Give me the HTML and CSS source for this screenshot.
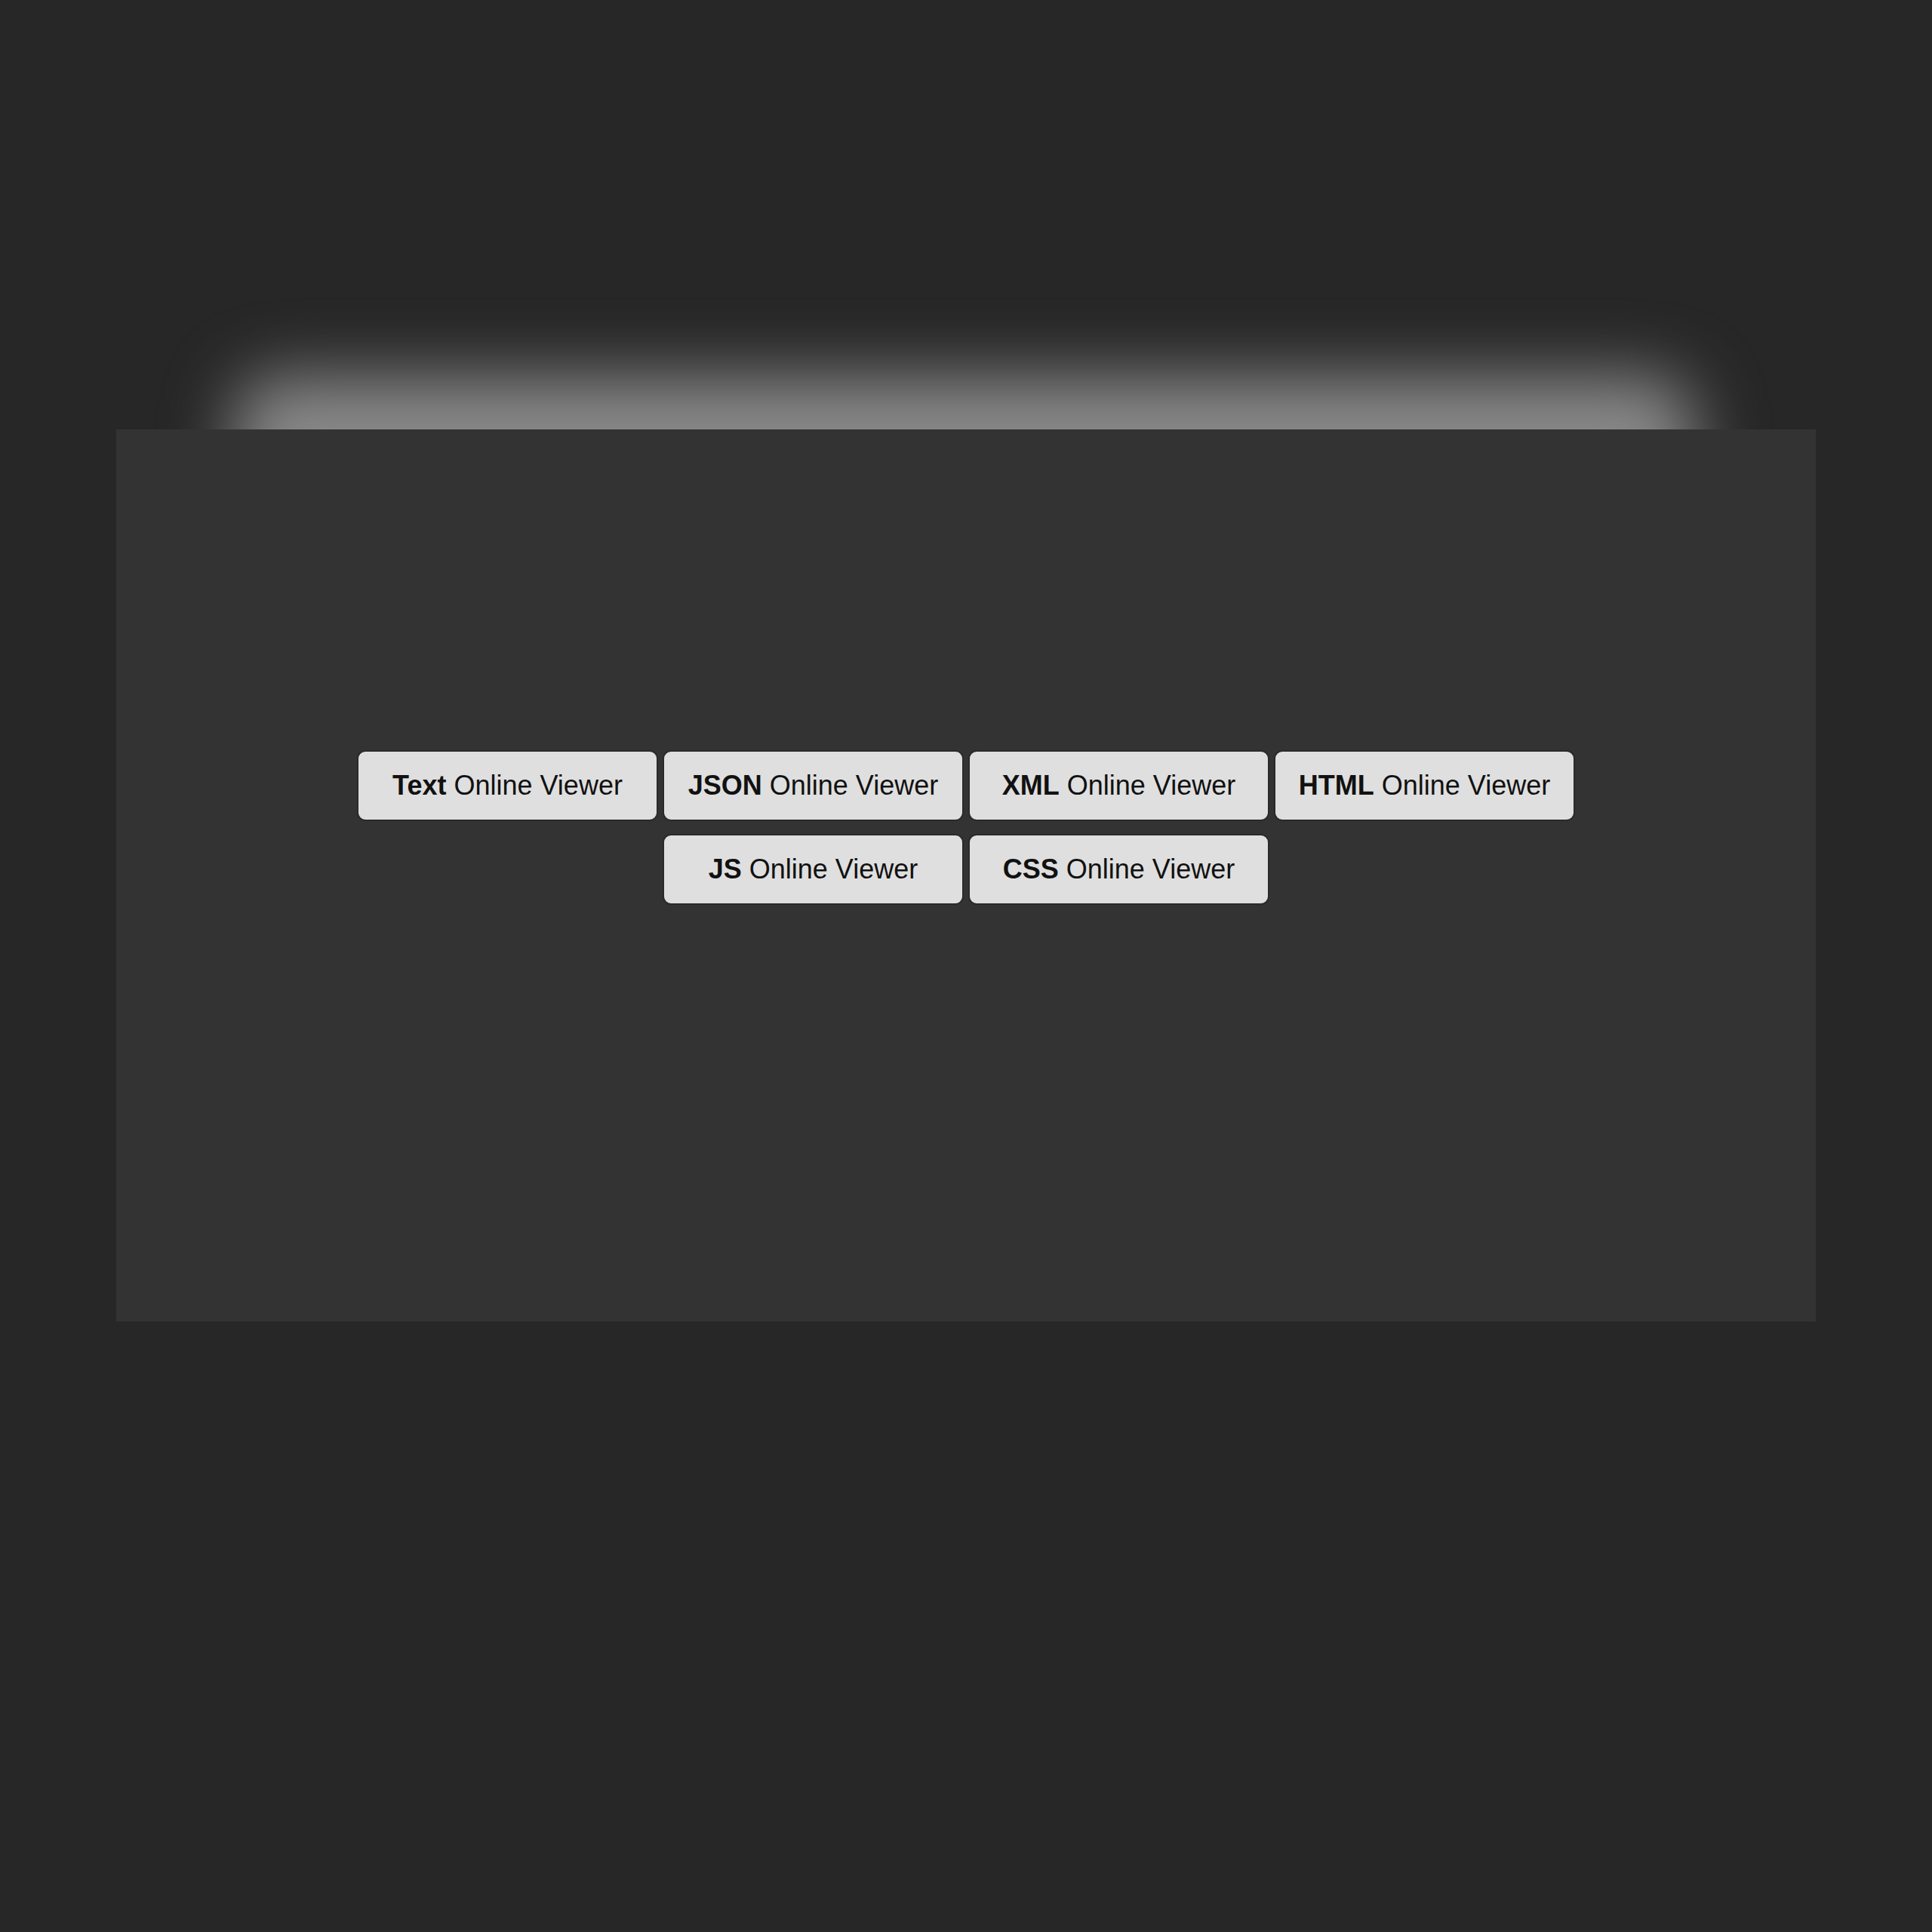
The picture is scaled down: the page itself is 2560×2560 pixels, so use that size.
FILE: index.html
```html
<!DOCTYPE html>
<html lang="en">
<head>
    <meta charset="UTF-8">
    <meta name="viewport" content="width=device-width, initial-scale=1.0">
    <title>Online Viewers</title>
    <link rel="stylesheet" href="styles.css">
</head>
<body>
    <div id="page">
        <div id="stage">
            <div class="glow"></div>
            <div id="panel">
                <div id="viewer-list">
                    <button class="viewer-button"><strong>Text</strong> Online Viewer</button>
                    <button class="viewer-button"><strong>JSON</strong> Online Viewer</button>
                    <button class="viewer-button"><strong>XML</strong> Online Viewer</button>
                    <button class="viewer-button"><strong>HTML</strong> Online Viewer</button>
                    <button class="viewer-button"><strong>JS</strong> Online Viewer</button>
                    <button class="viewer-button"><strong>CSS</strong> Online Viewer</button>
                </div>
            </div>
        </div>
    </div>
</body>
</html>
```

FILE: styles.css
```css
* {
    box-sizing: border-box;
    margin: 0;
    padding: 0;
}

body {
    font-family: 'Liberation Sans', Arial, sans-serif;
    background-color: #272727;
    min-height: 100vh;
}

#page {
    padding: 569px 154px 0;
}

#stage {
    position: relative;
}

/* blurred light behind the top edge of the panel */
.glow {
    position: absolute;
    top: -70px;
    left: 156px;
    right: 161px;
    height: 220px;
    background: #8a8a8a;
    border-radius: 60px;
    filter: blur(44px);
}

#panel {
    position: relative;
    z-index: 1;
    height: 1182px;
    background: #333333;
    padding-top: 425px;
}

#viewer-list {
    width: 1620px;
    margin: 0 auto;
    display: flex;
    flex-wrap: wrap;
    justify-content: center;
    gap: 17px 6px;
}

.viewer-button {
    width: 399px;
    height: 94px;
    background: #dfdfdf;
    color: #111;
    border: 2px solid #2a2a2a;
    border-radius: 11px;
    font-family: inherit;
    font-size: 36px;
    cursor: pointer;
}

.viewer-button strong {
    font-weight: 700;
}
```
